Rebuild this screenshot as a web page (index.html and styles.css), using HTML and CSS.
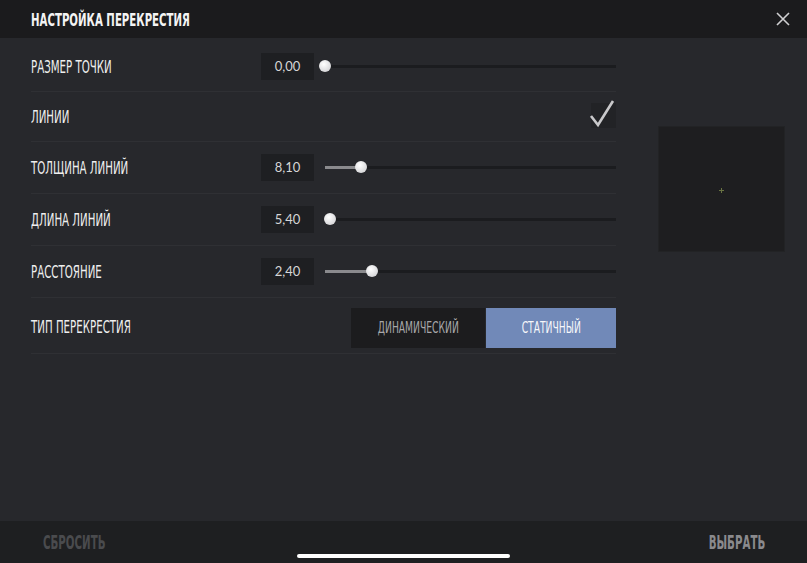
FILE: index.html
```html
<!DOCTYPE html>
<html>
	<head>
		<meta charset="utf-8">
		<title>Настройка перекрестия</title>
		<link rel="stylesheet" href="styles.css">
	</head>
	<body>
		<div class="top-bar">
			<div class="top-title"><span class="narrow">НАСТРОЙКА ПЕРЕКРЕСТИЯ</span></div>
			<a class="close-btn" href="javascript:;">
				<svg width="14" height="14" viewBox="0 0 14 14"><path d="M1 1L13 13M13 1L1 13" stroke="#cfcfd1" stroke-width="1.6" fill="none"/></svg>
			</a>
		</div>
		<div class="content">
			<div class="settings">
				<div class="row row-first">
					<div class="row-label"><span class="narrow">РАЗМЕР ТОЧКИ</span></div>
					<div class="value-box">0,00</div>
					<div class="slider"><div class="slider-fill" style="width: 0px"></div><div class="slider-thumb" style="left: 0px"></div></div>
				</div>
				<div class="row row-first">
					<div class="row-label"><span class="narrow">ЛИНИИ</span></div>
					<div class="check-box">
						<svg width="28" height="30" viewBox="0 0 28 30"><path d="M3 17L10 26L25 2" stroke="#c9c9cb" stroke-width="2.6" fill="none" stroke-linejoin="miter"/></svg>
					</div>
				</div>
				<div class="row">
					<div class="row-label"><span class="narrow">ТОЛЩИНА ЛИНИЙ</span></div>
					<div class="value-box">8,10</div>
					<div class="slider"><div class="slider-fill" style="width: 36px"></div><div class="slider-thumb" style="left: 36px"></div></div>
				</div>
				<div class="row">
					<div class="row-label"><span class="narrow">ДЛИНА ЛИНИЙ</span></div>
					<div class="value-box">5,40</div>
					<div class="slider"><div class="slider-fill" style="width: 5px"></div><div class="slider-thumb" style="left: 5px"></div></div>
				</div>
				<div class="row">
					<div class="row-label"><span class="narrow">РАССТОЯНИЕ</span></div>
					<div class="value-box">2,40</div>
					<div class="slider"><div class="slider-fill" style="width: 47px"></div><div class="slider-thumb" style="left: 47px"></div></div>
				</div>
				<div class="row row-last">
					<div class="row-label"><span class="narrow">ТИП ПЕРЕКРЕСТИЯ</span></div>
					<div class="switch">
						<div class="switch-item"><span class="narrow">ДИНАМИЧЕСКИЙ</span></div>
						<div class="switch-item active"><span class="narrow">СТАТИЧНЫЙ</span></div>
					</div>
				</div>
			</div>
			<div class="preview">
				<svg class="preview-cross" width="5" height="5" viewBox="0 0 5 5"><path d="M2.5 0V5M0 2.5H5" stroke="#6a7443" stroke-width="1"/></svg>
			</div>
		</div>
		<div class="bottom-bar">
			<a class="bottom-btn reset" href="javascript:;"><span class="narrow">СБРОСИТЬ</span></a>
			<a class="bottom-btn choose" href="javascript:;"><span class="narrow">ВЫБРАТЬ</span></a>
		</div>
		<div class="home-bar"></div>
	</body>
</html>
```
FILE: styles.css
```css
html, body {
	margin: 0;
	padding: 0;
}
body {
	width: 807px;
	height: 563px;
	overflow: hidden;
	display: flex;
	flex-direction: column;
	background-color: #27282c;
	font-family: "DejaVu Sans Condensed", "DejaVu Sans", sans-serif;
	color: #f0f0f0;
	position: relative;
}
.narrow {
	display: inline-block;
	transform: scaleX(.67);
	transform-origin: left center;
	white-space: nowrap;
}
.top-bar {
	height: 38px;
	flex: none;
	display: flex;
	align-items: center;
	justify-content: space-between;
	padding: 0 17px 0 31px;
	background-color: #1b1b1d;
}
.top-title {
	font-size: 18px;
	font-weight: bold;
	color: #f4f4f4;
}
.top-title .narrow {
	transform: scaleX(.63);
}
.close-btn {
	display: block;
	width: 14px;
	height: 14px;
}
.close-btn svg {
	display: block;
}
.content {
	flex: 1;
	display: flex;
	padding: 4px 0 0 31px;
}
.settings {
	width: 585px;
}
.row {
	height: 51px;
	display: flex;
	align-items: center;
	border-bottom: 1px solid #2f3034;
}
.row-first {
	height: 49px;
}
.row-last {
	height: 53px;
	padding-top: 2px;
}
.row-label {
	width: 230px;
	flex: none;
	font-size: 17px;
	color: #efefef;
}
.value-box {
	width: 53px;
	height: 27px;
	line-height: 27px;
	flex: none;
	text-align: center;
	background-color: #1e1f22;
	font-family: "Lato", "Open Sans", sans-serif;
	font-size: 13px;
	color: #d6d6d6;
}
.slider {
	flex: 1;
	margin-left: 11px;
	height: 3px;
	background-color: #1b1c1f;
	position: relative;
}
.slider-fill {
	height: 3px;
	background-color: #8a8a8d;
}
.slider-thumb {
	position: absolute;
	top: -5px;
	width: 12px;
	height: 12px;
	margin-left: -6px;
	border-radius: 50%;
	background: radial-gradient(circle at 40% 35%, #ffffff, #c9c9cc);
}
.check-box {
	margin-left: auto;
	margin-bottom: 2px;
	width: 25px;
	height: 25px;
	background-color: #222326;
	position: relative;
}
.check-box svg {
	position: absolute;
	left: -3px;
	top: -4px;
}
.switch {
	margin-left: auto;
	margin-top: 2px;
	display: flex;
	gap: 1px;
}
.switch-item {
	height: 40px;
	line-height: 40px;
	width: 134px;
	text-align: center;
	background-color: #1c1c1e;
	font-size: 16px;
	color: #a7a7a9;
}
.switch-item .narrow {
	transform: scaleX(.64);
	transform-origin: center center;
}
.switch-item.active {
	width: 130px;
	background-color: #7189b8;
	color: #f6f7fa;
}
.preview {
	margin: 84px 0 0 42px;
	width: 125px;
	height: 124px;
	background-color: #1e1e20;
	border: 1px solid #222325;
	position: relative;
}
.preview-cross {
	position: absolute;
	left: 60px;
	top: 61px;
}
.bottom-bar {
	height: 42px;
	flex: none;
	display: flex;
	align-items: center;
	justify-content: space-between;
	padding: 0 42px 0 43px;
	background-color: #1e1f21;
}
.bottom-btn {
	text-decoration: none;
	font-size: 19px;
	font-weight: bold;
}
.bottom-btn .narrow {
	transform: scaleX(.6);
}
.bottom-btn.reset {
	color: #4a4b4e;
}
.bottom-btn.choose {
	color: #8a8a8d;
}
.bottom-btn.choose .narrow {
	transform-origin: right center;
}
.home-bar {
	position: absolute;
	left: 297px;
	bottom: 5px;
	width: 213px;
	height: 4px;
	border-radius: 2px;
	background-color: #ffffff;
}
```
